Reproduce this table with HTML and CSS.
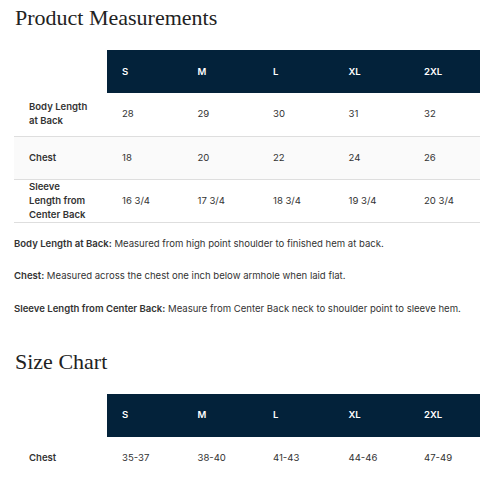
FILE: index.html
```html
<!DOCTYPE html>
<html lang="en">
<head>
    <meta charset="UTF-8">
    <meta name="viewport" content="width=device-width, initial-scale=1.0">
    <title>Product Measurements</title>
    <link rel="stylesheet" href="styles.css">
</head>
<body>
    <div class="page">
        <h2 class="section-title">Product Measurements</h2>
        <div class="table-wrap">
            <table class="size-table">
                <thead>
                    <tr>
                        <th class="blank"></th>
                        <th>S</th>
                        <th>M</th>
                        <th>L</th>
                        <th>XL</th>
                        <th>2XL</th>
                    </tr>
                </thead>
                <tbody>
                    <tr>
                        <td class="label">Body Length at Back</td>
                        <td>28</td>
                        <td>29</td>
                        <td>30</td>
                        <td>31</td>
                        <td>32</td>
                    </tr>
                    <tr class="shaded">
                        <td class="label">Chest</td>
                        <td>18</td>
                        <td>20</td>
                        <td>22</td>
                        <td>24</td>
                        <td>26</td>
                    </tr>
                    <tr>
                        <td class="label">Sleeve Length from Center Back</td>
                        <td>16 3/4</td>
                        <td>17 3/4</td>
                        <td>18 3/4</td>
                        <td>19 3/4</td>
                        <td>20 3/4</td>
                    </tr>
                </tbody>
            </table>
        </div>

        <!-- how each measurement is taken -->
        <div class="notes">
            <p><strong>Body Length at Back:</strong> Measured from high point shoulder to finished hem at back.</p>
            <p><strong>Chest:</strong> Measured across the chest one inch below armhole when laid flat.</p>
            <p><strong>Sleeve Length from Center Back:</strong> Measure from Center Back neck to shoulder point to sleeve hem.</p>
        </div>

        <h2 class="section-title">Size Chart</h2>
        <div class="table-wrap">
            <table class="size-table">
                <thead>
                    <tr>
                        <th class="blank"></th>
                        <th>S</th>
                        <th>M</th>
                        <th>L</th>
                        <th>XL</th>
                        <th>2XL</th>
                    </tr>
                </thead>
                <tbody>
                    <tr>
                        <td class="label">Chest</td>
                        <td>35-37</td>
                        <td>38-40</td>
                        <td>41-43</td>
                        <td>44-46</td>
                        <td>47-49</td>
                    </tr>
                </tbody>
            </table>
        </div>
    </div>
</body>
</html>
```

FILE: styles.css
```css
* {
    margin: 0;
    padding: 0;
    box-sizing: border-box;
}

body {
    background-color: #fff;
    color: #333;
    font-family: Inter, "Noto Sans", sans-serif;
    font-size: 9.55px;
    overflow: hidden;
}

.page {
    padding: 0 0 0 14px;
}

.section-title {
    font-family: "Liberation Serif", "DejaVu Serif", serif;
    font-weight: 400;
    font-size: 22px;
    line-height: 30px;
    color: #222;
    padding: 3px 0 0 1px;
    margin-bottom: 17px;
}

.size-table {
    border-collapse: collapse;
    table-layout: fixed;
    width: 470.5px;
}

.size-table th,
.size-table td {
    height: 43px;
    padding: 0 15px;
    text-align: left;
    vertical-align: middle;
    line-height: 14px;
    width: 75.5px;
}

.size-table thead th {
    height: 43px;
    background-color: #03223a;
    color: #fff;
    font-weight: 600;
}

.size-table th.blank {
    background-color: transparent;
    width: 93px;
}

.size-table td {
    border-bottom: 1px solid #dedede;
}

.size-table td.label {
    font-weight: 600;
    width: 93px;
}

.size-table tr.shaded td {
    background-color: #fafafa;
}

.notes {
    padding-top: 13px;
}

.notes p {
    line-height: 16px;
    margin-bottom: 16.5px;
    white-space: nowrap;
}

.notes p strong {
    font-weight: 600;
}

.notes + .section-title {
    margin-top: 27px;
}
```
